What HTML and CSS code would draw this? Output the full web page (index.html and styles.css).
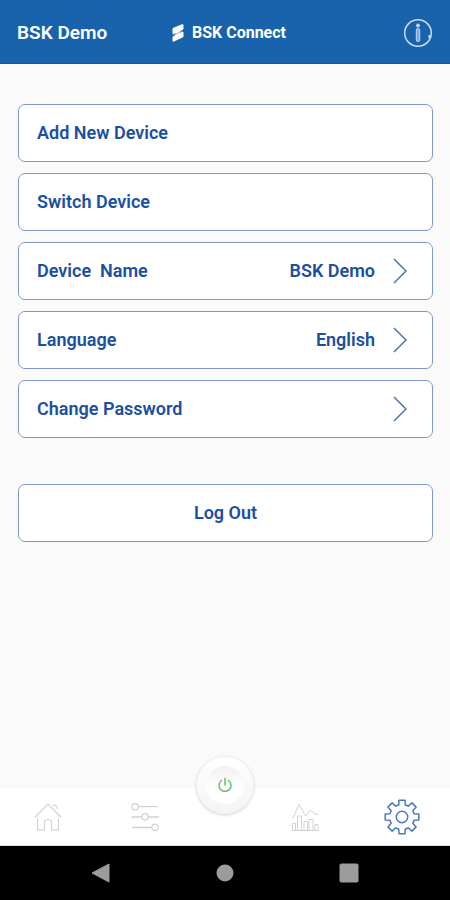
FILE: index.html
```html
<!DOCTYPE html>
<html lang="en">
<head>
<meta charset="utf-8">
<meta name="viewport" content="width=device-width, initial-scale=1">
<title>BSK Connect</title>
<link rel="stylesheet" href="styles.css">
</head>
<body>
<div class="app">
  <header class="header">
    <span class="header-device">BSK Demo</span>
    <h1 class="brand">
      <svg class="brand-mark" width="12" height="18" viewBox="0 0 12 18" aria-hidden="true"><path d="M.5 5Q.5 4.300 1.500 3.800L10 .3Q11.500 0 11.500 1.500V4.500Q11.500 5.500 10 6.200L7 7.600H10.500Q11.500 7.600 11.500 9V12Q11.500 13 10.500 13.500L2 17.500Q.5 18 .5 16.500V13.500Q.5 12.500 2 11.800L4.500 10.500H1.500Q.5 10.500 .5 9.500Z" fill="#fff"/><path d="M.5 10.200 5 9.500 11.500 7.200" fill="none" stroke="#1863ac" stroke-width=".5"/></svg>
      <span>BSK Connect</span>
    </h1>
    <button class="icon-button header-info" type="button" aria-label="Information">
      <svg width="30" height="30" viewBox="0 0 30 30" fill="none" stroke="#c9dcf8" aria-hidden="true"><circle cx="15" cy="15" r="13.300" stroke-width="1.500"/><path d="M26.500 17V20.500" stroke-width="2"/><circle cx="15" cy="7.500" r="1.500" fill="#c9dcf8"/><rect x="13.300" y="10.500" width="3.400" height="13" rx="1.500" fill="#7da6d8"/></svg>
    </button>
  </header>

  <main class="content">
    <div class="settings">
      <button class="row" type="button"><span class="row-label">Add New Device</span></button>
      <button class="row" type="button"><span class="row-label">Switch Device</span></button>
      <button class="row" type="button"><span class="row-label">Device&nbsp; Name</span><span>BSK Demo</span><svg class="chevron" width="14" height="26" viewBox="0 0 14 26" aria-hidden="true"><path d="M1 1 13 13 1 25"/></svg></button>
      <button class="row" type="button"><span class="row-label">Language</span><span>English</span><svg class="chevron" width="14" height="26" viewBox="0 0 14 26" aria-hidden="true"><path d="M1 1 13 13 1 25"/></svg></button>
      <button class="row" type="button"><span class="row-label">Change Password</span><svg class="chevron" width="14" height="26" viewBox="0 0 14 26" aria-hidden="true"><path d="M1 1 13 13 1 25"/></svg></button>
    </div>
    <button class="row row-center" type="button">Log Out</button>
  </main>

  <nav class="tabs" aria-label="Main">
    <button class="icon-button tab" type="button" aria-label="Home">
      <svg width="28" height="28" viewBox="0 0 28 28" fill="none" stroke="#d2d2d2" stroke-width="1.200" aria-hidden="true"><path d="M.7 14.500 14 1.200 27.300 14.500M3.500 15.500V26.800H10.500V20A3.500 3.500 0 0 1 17.500 20V26.800H24.500V15.500M18.500 2.500Q22.500 1 23.500 6"/></svg>
    </button>
    <button class="icon-button tab" type="button" aria-label="Controls">
      <svg width="28" height="28" viewBox="0 0 28 28" fill="none" stroke="#d2d2d2" stroke-width="1.300" aria-hidden="true"><path d="M7.500 3.700H27M.5 14H10.500M17.500 14H28M1 24.500H20.500"/><circle cx="4" cy="3.700" r="3.200"/><circle cx="14" cy="13.800" r="3.200"/><circle cx="24" cy="24.300" r="3.200"/></svg>
    </button>
    <button class="power" type="button" aria-label="Power">
      <span class="power-face">
        <svg width="16" height="16" viewBox="0 0 16 16" fill="none" stroke="#5fc36d" stroke-width="1.500" stroke-linecap="round" aria-hidden="true"><path d="M8 1.500V8M4.500 3.500A6 6 0 1 0 11.500 3.500"/></svg>
      </span>
    </button>
    <button class="icon-button tab" type="button" aria-label="Statistics">
      <svg width="28" height="28" viewBox="0 0 28 28" fill="none" stroke="#d2d2d2" aria-hidden="true"><path d="M1.500 16 8 1.500 14.500 13 19.500 7 23.500 11 27.500 11.500M.5 27.500H27.500M1.500 27V20.500H4.500V27M6.500 27V13H10.500V27M13 27V18.500H16.500V27M18 27V16.500H22V27M24 27V21.500H27V27"/></svg>
    </button>
    <button class="icon-button tab" type="button" aria-label="Settings" aria-current="page">
      <svg width="36" height="36" viewBox="-18 -18 36 36" fill="none" stroke="#4b79b5" stroke-width="1.500" stroke-linejoin="round" aria-hidden="true"><path d="M-3.300-12-3-16.800H3L3.300-12Q5-11.500 6.200-10.800L9.900-14.140 14.140-9.900 10.800-6.200Q11.500-5 12-3.300L16.800-3V3L12 3.300Q11.500 5 10.800 6.200L14.140 9.900 9.900 14.140 6.200 10.800Q5 11.500 3.300 12L3 16.800H-3L-3.300 12Q-5 11.500-6.200 10.800L-9.900 14.140-14.140 9.900-10.800 6.200Q-11.500 5-12 3.300L-16.800 3V-3L-12-3.300Q-11.500-5-10.800-6.200L-14.140-9.900-9.900-14.140-6.200-10.800Q-5-11.500-3.300-12Z"/><circle r="5.700"/></svg>
    </button>
  </nav>

  <div class="system-nav">
    <button class="icon-button" type="button" aria-label="Back"><svg width="20" height="20" viewBox="0 0 20 20" aria-hidden="true"><path d="M18 1V19L1 10Z" fill="#9c9c9c" stroke="#9c9c9c" stroke-linejoin="round"/></svg></button>
    <button class="icon-button" type="button" aria-label="Home screen"><svg width="20" height="20" viewBox="0 0 20 20" aria-hidden="true"><circle cx="10" cy="10" r="8.500" fill="#9c9c9c"/></svg></button>
    <button class="icon-button" type="button" aria-label="Recent apps"><svg width="20" height="20" viewBox="0 0 20 20" aria-hidden="true"><rect x=".5" y=".5" width="19" height="19" rx="2" fill="#9c9c9c"/></svg></button>
  </div>
</div>
</body>
</html>
```
FILE: styles.css
```css
* {
  box-sizing: border-box;
}

body {
  margin: 0;
  background: #fafafa;
  font-family: Roboto, "Liberation Sans", sans-serif;
}

button {
  margin: 0;
  font: inherit;
  color: inherit;
  cursor: pointer;
}

svg {
  display: block;
  flex: none;
}

.app {
  display: flex;
  flex-direction: column;
  min-height: 100vh;
}

.icon-button {
  padding: 0;
  border: 0;
  background: none;
}

.header {
  display: grid;
  grid-template-columns: 1fr auto 1fr;
  align-items: center;
  padding: 18px 17px 15px;
  background: #1863ac;
  border-bottom: 1px solid #1458a0;
  color: #fff;
}

.header-device {
  font-size: 19px;
  line-height: 30px;
  font-weight: 600;
}

.brand {
  display: flex;
  align-items: center;
  gap: 8px;
  margin: 0;
  padding-left: 8px;
  font-size: 16px;
  line-height: 30px;
  font-weight: 700;
}

.header-info {
  justify-self: end;
}

.content {
  flex: 1;
  display: flex;
  flex-direction: column;
  gap: 46px;
  padding: 40px 17px 39px 18px;
}

.settings {
  display: flex;
  flex-direction: column;
  gap: 11px;
}

.row {
  display: flex;
  align-items: center;
  gap: 18px;
  width: 100%;
  padding: 15px 25px 15px 18px;
  border: 1px solid #7f98cc;
  border-radius: 7px;
  background: #fff;
  color: #1b4fa0;
  font-size: 18px;
  line-height: 26px;
  font-weight: 600;
  text-align: left;
}

.row-label {
  flex: 1;
}

.row-center {
  justify-content: center;
  padding: 15px 18px;
}

.chevron {
  fill: none;
  stroke: #4b73b5;
  stroke-width: 1.5;
}

.tabs {
  display: grid;
  grid-template-columns: 96fr 97fr 64fr 96fr 97fr;
  align-items: center;
  height: 58px;
  border-bottom: 1px solid #ddd;
  background: #fff;
}

.tab {
  justify-self: center;
}

.power {
  justify-self: center;
  align-self: start;
  display: grid;
  place-items: center;
  width: 58px;
  height: 58px;
  margin-top: -32px;
  padding: 0;
  border: 1px solid #f0f0f0;
  border-radius: 50%;
  background: linear-gradient(#fff, #f4f4f4);
  box-shadow: 0 1px 3px #0003;
}

.power-face {
  display: grid;
  place-items: center;
  width: 38px;
  height: 38px;
  border-radius: 50%;
  background: linear-gradient(#f1f1f1, #fff 60%);
}

.system-nav {
  display: flex;
  justify-content: space-between;
  padding: 17px 91px;
  background: #000;
}
```
